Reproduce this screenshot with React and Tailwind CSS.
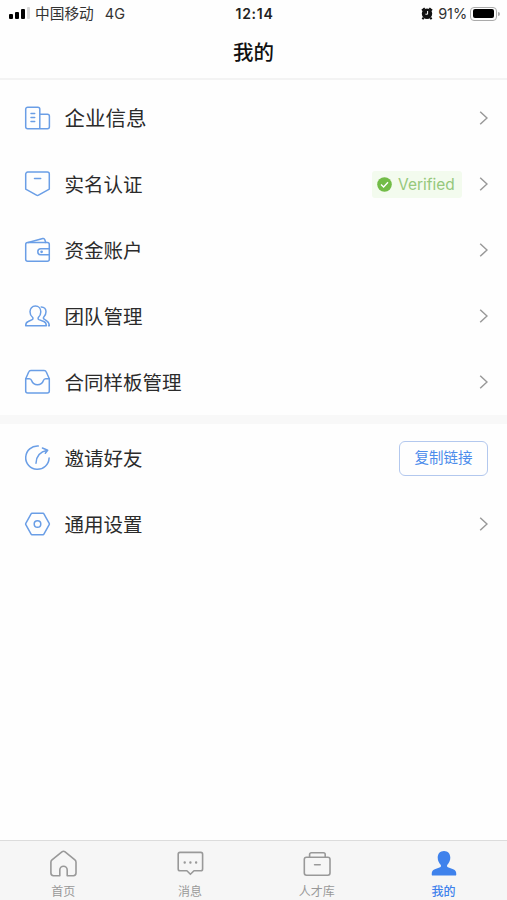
/**
 * @file App.jsx
 * @description 我的 - profile menu page
 */

import React from 'react';

const Svg = ({ children, className = 'text-[#6a9ee6]', width = 1.5, size = 28 }) => (
  <svg
    width={size}
    height={size}
    viewBox="0 0 28 28"
    fill="none"
    stroke="currentColor"
    strokeWidth={width}
    strokeLinecap="round"
    strokeLinejoin="round"
    className={`shrink-0 ${className}`}
  >
    {children}
  </svg>
);

const CompanyIcon = () => (
  <Svg>
    <path d="M17 24.8H4.7a2 2 0 0 1-2-2V5.2a2 2 0 0 1 2-2H14.8a2 2 0 0 1 2 2V24.8H24.4a2 2 0 0 0 2-2V12.2a2 2 0 0 0-2-2H17" />
    <path d="M8 9.5h3.7M8 13.5h3.7M8 17.6h3.7" />
  </Svg>
);

const VerifyIcon = () => (
  <Svg>
    <path d="M4.7 2.1H24.3a2 2 0 0 1 2 2V19.1L15.5 25.1q-1 .6-2 0L2.7 19.1V4.1a2 2 0 0 1 2-2Z" />
    <path d="M11.5 8.6h6.2" />
  </Svg>
);

const WalletIcon = () => (
  <Svg>
    <rect x="2.7" y="6.6" width="23.6" height="18.7" rx="2" />
    <path d="M5.2 6.5 19.8 2.5q1.4-.4 1.9 1L22.8 6.4" />
    <path d="M26.3 12.8H17.8a3 3 0 0 0 0 6h8.5" />
    <circle cx="18.6" cy="15.8" r="0.6" fill="currentColor" />
  </Svg>
);

const TeamIcon = () => (
  <Svg>
    <path d="M12.4 4.1c3.3 0 5.4 2.4 5.4 5.6 0 2.4-1 4.4-2.3 5.6-.7.7-.5 1.9.4 2.3l4.9 1.9c1.7.7 2.5 1.9 2.5 4.3H2.7c0-2.4.8-3.6 2.5-4.3l4-1.9c.9-.4 1-1.6.3-2.3C8.1 14.1 7 12.1 7 9.7c0-3.2 2.1-5.6 5.4-5.6Z" />
    <path d="M18.2 4.9c3 0 4.8 2.2 4.8 4.9 0 2.2-1 4-2.2 5.2-.6.6-.5 1.6.3 2l2.600 1.900c1.700 1 2.500 2.300 2.600 4.900H25.500" />
  </Svg>
);

const InboxIcon = () => (
  <Svg>
    <path d="M2.7 10.8 5.7 4a2.4 2.4 0 0 1 2.3-1.500H21A2.400 2.400 0 0 1 23.300 4l3 6.800V23a2 2 0 0 1-2 2H4.700a2 2 0 0 1-2-2Z" />
    <path d="M2.700 10.800H6.300c1.700 0 2 .8 2.400 2 .8 2.300 2.800 3.900 5.800 3.900s5-1.600 5.800-3.900c.4-1.200.7-2 2.400-2h3.600" />
  </Svg>
);

const InviteIcon = () => (
  <Svg>
    <path d="M15.300 2A11.700 11.700 0 1 0 26.100 14" />
    <path d="M13 19.300C13.200 13.200 16.800 7.800 24.300 6.300M19.400 4 24.700 6.200 22.300 9.200" />
  </Svg>
);

const SettingIcon = () => (
  <Svg>
    <path d="M9 3.300H20a1 1 0 0 1 .9.500L26.200 13.300a1.400 1.400 0 0 1 0 1.400L20.900 24.200a1 1 0 0 1-.9.500H9a1 1 0 0 1-.9-.5L2.800 14.700a1.400 1.400 0 0 1 0-1.400L8.100 3.800A1 1 0 0 1 9 3.300Z" />
    <circle cx="14.500" cy="14" r="3.300" />
  </Svg>
);

const HomeIcon = () => (
  <Svg className="text-[#999]" width={1.6}>
    <path d="M10.800 25.700H4.500a2.600 2.600 0 0 1-2.600-2.600V12.300q0-1.500 1.100-2.400L12.900 1.900q1.600-1.200 3.200 0L25.900 9.900q1.100.9 1.100 2.400V23.100a2.600 2.600 0 0 1-2.600 2.600H18.200V19.900a3.700 3.700 0 0 0-7.400 0Z" />
  </Svg>
);

const MessageIcon = () => (
  <Svg className="text-[#999]" width={1.6}>
    <path d="M4 2.400H24.800a1.800 1.800 0 0 1 1.800 1.800V19a1.800 1.800 0 0 1-1.800 1.800H18L14.400 24.300 10.900 20.800H4A1.800 1.800 0 0 1 2.200 19V4.200A1.800 1.800 0 0 1 4 2.400Z" />
    <path d="M8.700 12.500h.02M14.400 12.500h.02M20.100 12.500h.02" strokeWidth="2.400" />
  </Svg>
);

const TalentIcon = () => (
  <Svg className="text-[#999]" width={1.6}>
    <rect x="1.300" y="7.200" width="25.700" height="18.100" rx="2.200" />
    <path d="M6.600 7V4.400a1.700 1.700 0 0 1 1.700-1.700H20.500a1.700 1.700 0 0 1 1.700 1.700V7M11.600 14.800h5.600" />
  </Svg>
);

const MineIcon = () => (
  <Svg className="text-[#3f82ec]" width={0}>
    <path
      fill="currentColor"
      d="M14 1c3.900 0 6.300 2.800 6.300 6.600 0 3-1.200 5.600-2.900 7.100-.7.700-.5 2.200.5 2.600l5.300 2c2.200.9 3.100 2.100 3.100 5.100q0 1.200-1.200 1.200H2.900q-1.200 0-1.200-1.200c0-3 .9-4.200 3.100-5.100l5.300-2c1-.4 1.200-1.900.5-2.600C8.900 13.200 7.700 10.600 7.700 7.600 7.700 3.800 10.100 1 14 1Z"
    />
  </Svg>
);

const tabs = [
  { label: '首页', icon: <HomeIcon /> },
  { label: '消息', icon: <MessageIcon /> },
  { label: '人才库', icon: <TalentIcon /> },
  { label: '我的', icon: <MineIcon />, active: true },
];

const Chevron = () => (
  <svg width="10" height="16" viewBox="0 0 10 16" fill="none" stroke="#999" strokeWidth="1.500" className="shrink-0">
    <path d="M2.200 1.700 9 8 2.200 14.300" />
  </svg>
);

const MenuRow = ({ icon, label, labelClass = 'text-[19.500px]', children }) => (
  <div className="flex h-[66px] items-center pr-[19px] pl-[23px]">
    {icon}
    <span className={`ml-[13.500px] flex-1 pt-[2px] leading-7 text-[#2b2b2b] ${labelClass}`}>{label}</span>
    {children || <Chevron />}
  </div>
);

const StatusBar = () => (
  <div className="flex h-[27px] items-center text-[14.700px] text-[#333]">
    <div className="flex flex-1 items-center pl-[9px]">
      {/* Signal */}
      <div className="flex items-end gap-[2px]">
        <i className="h-[5px] w-[4px] rounded-[1px] bg-black" />
        <i className="h-[7px] w-[4px] rounded-[1px] bg-black" />
        <i className="h-[10px] w-[4px] rounded-[1px] bg-black" />
        <i className="h-[12px] w-[3px] rounded-[1px] bg-[#d8d8d8]" />
      </div>
      <span className="ml-[5px] pt-[2px]">中国移动</span>
      <span className="ml-[11px] font-[Inter] text-[14.500px]">4G</span>
    </div>
    <span className="font-[Inter] text-[14px] font-semibold tracking-[0.700px] text-[#222]">12:14</span>
    <div className="flex flex-1 items-center justify-end pr-[7px]">
      {/* Alarm */}
      <svg width="12" height="13" viewBox="0 0 12 13">
        <circle cx="6" cy="6.700" r="5.200" fill="#111" />
        <path d="M1 3.600 3.800 1.200M11 3.600 8.200 1.200M2.600 10.600 1.500 12.200M9.400 10.600l1.100 1.600" stroke="#111" strokeWidth="2" />
        <path d="M6.600 4v3.200H4.400" stroke="#fff" strokeWidth="1" fill="none" />
      </svg>
      <span className="ml-[5px] font-[Inter] text-[14.500px] tracking-[-0.100px]">91%</span>
      {/* Battery */}
      <div className="ml-[3px] h-[14px] w-[27px] rounded-[4px] border border-[#aaa] p-[1.500px]">
        <div className="h-full w-[21px] rounded-[2px] bg-black" />
      </div>
      <i className="ml-px h-[4px] w-[2px] rounded-r bg-[#aaa]" />
    </div>
  </div>
);

const App = () => {
  return (
    <div className="flex h-[900px] w-full flex-col overflow-hidden bg-[#fefefe] font-['Liberation_Sans','Noto_Sans_CJK_SC',sans-serif]">
      <StatusBar />

      {/* Header */}
      <header className="flex h-[53px] items-center justify-center border-b-2 border-[#f3f3f3] pt-[2px] text-[20.500px] font-medium text-[#111]">
        我的
      </header>

      <main className="flex-1 pt-[5px]">
        <MenuRow icon={<CompanyIcon />} label="企业信息" labelClass="text-[20.500px]" />
        <MenuRow icon={<VerifyIcon />} label="实名认证">
          <div className="mr-[16px] flex h-[27px] w-[90px] items-center rounded-[3px] bg-[#f3fbee] pl-[5px]">
            <svg width="15" height="15" viewBox="0 0 15 15" fill="none">
              <circle cx="7.500" cy="7.500" r="7.300" fill="#72bc47" />
              <path d="M4 7.600 6.600 10 11 5.300" stroke="#fff" strokeWidth="1.400" />
            </svg>
            <span className="ml-[6px] pt-px font-[Inter] text-[15.500px] text-[#96c87c]">Verified</span>
          </div>
          <Chevron />
        </MenuRow>
        <MenuRow icon={<WalletIcon />} label="资金账户" />
        <MenuRow icon={<TeamIcon />} label="团队管理" />
        <MenuRow icon={<InboxIcon />} label="合同样板管理" />

        <div className="mb-px h-[9px] bg-[#f8f8f8]" />

        <MenuRow icon={<InviteIcon />} label="邀请好友">
          <button className="h-[35px] w-[89px] rounded-[6px] border border-[#b3c8ee] pt-[2px] text-[14.500px] text-[#4c8ceb]">
            复制链接
          </button>
        </MenuRow>
        <MenuRow icon={<SettingIcon />} label="通用设置" />
      </main>

      {/* Tab bar */}
      <nav className="grid h-[60px] grid-cols-4 border-t border-[#dcdcdc] bg-[#f6f6f6]">
        {tabs.map((tab) => (
          <div key={tab.label} className="flex flex-col items-center pt-[9px]">
            {tab.icon}
            <span
              className={`mt-[4px] text-[12px] leading-[20px] ${
                tab.active ? 'font-medium text-[#3f82ec]' : 'text-[#999]'
              }`}
            >
              {tab.label}
            </span>
          </div>
        ))}
      </nav>
    </div>
  );
};

export default App;
